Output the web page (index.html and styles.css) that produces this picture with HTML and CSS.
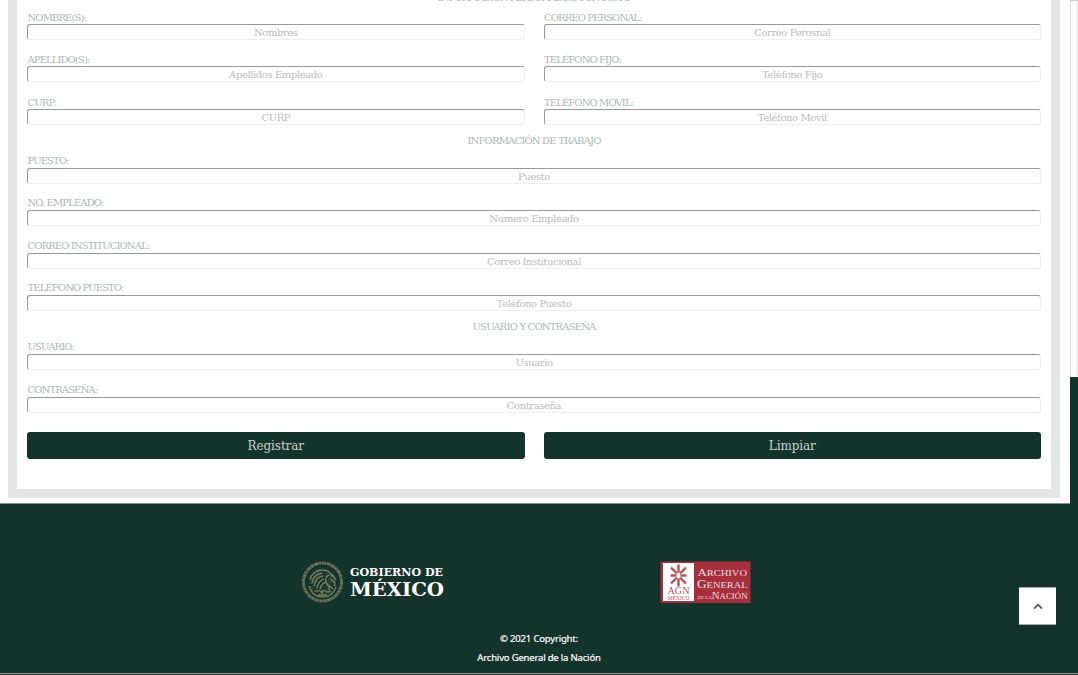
FILE: index.html
```html
<!DOCTYPE html>
<html lang="es">
<head>
<meta charset="utf-8">
<title>Registro de empleado</title>
<link rel="stylesheet" href="styles.css">
</head>
<body>
<div class="page">
  <main class="main">
    <form class="panel">
      <h2 class="title title-first">INFORMACIÓN PERSONAL DE CONTACTO</h2>
      <div class="columns">
        <div class="stack">
          <label class="field"><span class="label">NOMBRE(S):</span><input class="input" placeholder="Nombres"></label>
          <label class="field"><span class="label">APELLIDO(S):</span><input class="input" placeholder="Apellidos Empleado"></label>
          <label class="field"><span class="label">CURP:</span><input class="input" placeholder="CURP"></label>
        </div>
        <div class="stack">
          <label class="field"><span class="label">CORREO PERSONAL:</span><input class="input" placeholder="Correo Perosnal"></label>
          <label class="field"><span class="label">TELÉFONO FIJO:</span><input class="input" placeholder="Teléfono Fijo"></label>
          <label class="field"><span class="label">TELÉFONO MOVIL:</span><input class="input" placeholder="Teléfono Movil"></label>
        </div>
      </div>
      <h2 class="title">INFORMACIÓN DE TRABAJO</h2>
      <div class="stack">
        <label class="field"><span class="label">PUESTO:</span><input class="input" placeholder="Puesto"></label>
        <label class="field"><span class="label">NO. EMPLEADO:</span><input class="input" placeholder="Numero Empleado"></label>
        <label class="field"><span class="label">CORREO INSTITUCIONAL:</span><input class="input" placeholder="Correo Institucional"></label>
        <label class="field"><span class="label">TELÉFONO PUESTO:</span><input class="input" placeholder="Teléfono Puesto"></label>
      </div>
      <h2 class="title">USUARIO Y CONTRASEÑA</h2>
      <div class="stack">
        <label class="field"><span class="label">USUARIO:</span><input class="input" placeholder="Usuario"></label>
        <label class="field"><span class="label">CONTRASEÑA:</span><input class="input" placeholder="Contraseña"></label>
      </div>
      <div class="columns actions">
        <button class="button" type="button">Registrar</button>
        <button class="button" type="button">Limpiar</button>
      </div>
    </form>
  </main>
  <aside class="edge"></aside>
  <footer class="footer">
    <div class="logos">
      <svg class="logo-mx" width="150" height="44" viewBox="0 0 150 44">
        <g fill="none" stroke="#8b8b6c">
          <circle cx="22.500" cy="22" r="19" stroke-width="3" stroke-dasharray="2.600 .5 1.400 .4 3 .6" opacity=".75"/>
          <!-- eagle: wing feathers, head and tail -->
          <path stroke-width="1.500" opacity=".8" d="M10 20c1-6 6-10 12-10 5 0 8 2 9 5l3 2M12 23c1-6 5-9 10-10M14 26c1-6 4-9 9-10M17 28c1-5 3-8 7-9M20 29c1-4 3-6 6-7M29 15c-3 1-4 4-3 7s4 4 3 8M30 19c3 1 5 4 5 7M27 24l6 5M32 14l4 6"/>
          <!-- nopal and laurel -->
          <path stroke-width="1.600" opacity=".75" d="M9 26c2 7 7 11 13.500 11S34 33 36 27M15 32c2-2 4-2 6 0 2-2 4-2 6 0 2-1 3-1 4 0M18 35h9M22.500 31v6"/>
          <circle cx="22.500" cy="22" r="9" stroke-width="9" stroke-dasharray="1 1.200" opacity=".25"/>
        </g>
        <text class="mx-small" x="50" y="15.500" textLength="93" lengthAdjust="spacingAndGlyphs">GOBIERNO DE</text>
        <text class="mx-big" x="50" y="35.500" textLength="94" lengthAdjust="spacingAndGlyphs">MÉXICO</text>
      </svg>
      <svg class="logo-agn" width="91" height="43" viewBox="0 0 91 43">
        <rect x=".5" y=".5" width="90" height="41.500" fill="#a52f3a"/>
        <rect x="3" y="2" width="31" height="38" fill="#fff"/>
        <g fill="none" stroke="#b9525a" stroke-width="2.400">
          <path d="M18.500 3.500v8M18.500 17.500v8M10.500 14.500h6M20.500 14.500h6M11 6.500l6 6M26 6.500l-6 6M11 22.500l6-6M26 22.500l-6-6"/>
        </g>
        <text class="agn-red" x="7.500" y="32.500" font-size="10.500" textLength="22" lengthAdjust="spacingAndGlyphs">AGN</text>
        <text class="agn-red" x="7.500" y="38.500" font-size="5.500" textLength="22" lengthAdjust="spacingAndGlyphs">MÉXICO</text>
        <text class="agn" x="37.500" y="14.500" textLength="49.500" lengthAdjust="spacingAndGlyphs"><tspan font-size="11">A</tspan>RCHIVO</text>
        <text class="agn" x="37" y="26.500" textLength="50.500" lengthAdjust="spacingAndGlyphs"><tspan font-size="11.500">G</tspan>ENERAL</text>
        <text class="agn" x="37.500" y="37.500" textLength="50" lengthAdjust="spacingAndGlyphs"><tspan font-size="5">DE LA</tspan><tspan font-size="11">N</tspan>ACIÓN</text>
      </svg>
    </div>
    <p class="copy copy-year">© 2021 Copyright:</p>
    <p class="copy copy-org">Archivo General de la Nación</p>
  </footer>
  <div class="baseline"></div>
  <button class="to-top" type="button" aria-label="Subir">
    <svg width="10" height="7" viewBox="0 0 10 7"><path d="M1 5.700L5 1.700l4 4" fill="none" stroke="#555" stroke-width="1.800"/></svg>
  </button>
</div>
</body>
</html>
```
FILE: styles.css
```css
* { box-sizing: border-box; }
body { margin: 0; background: #fff; font-family: "DejaVu Serif", serif; overflow: hidden; }
.page { position: relative; width: 1078px; height: 675px; overflow: hidden; display: grid; grid-template-columns: 1070px 8px; grid-template-rows: 503px 170px 2px; background: linear-gradient(#14332b, #14332b) 1070px 377px / 8px 298px no-repeat #fff; }
.main { padding: 0 10px 5px 8px; overflow: hidden; }
.panel { height: 517.200px; margin-top: -19.200px; border: 9px solid #e5e5e5; border-top: 0; padding: 0 10px; }
.title { margin: 0; height: 29.200px; display: flex; align-items: center; justify-content: center; padding-top: 2px; font-size: 10px; font-weight: 400; letter-spacing: -.82px; color: #adb7b3; white-space: nowrap; }
.title-first { padding-top: 4px; letter-spacing: -1.050px; }
.columns { display: grid; grid-template-columns: 1fr 1fr; gap: 19px; }
.stack { display: flex; flex-direction: column; gap: 12.400px; }
.field { display: block; }
.label { display: block; height: 14px; line-height: 14.400px; padding-left: .5px; font-size: 10px; letter-spacing: -.9px; color: #adb7b3; white-space: nowrap; }
.columns .label { line-height: 16px; }
.input { display: block; width: 100%; height: 16px; margin: 0; padding: 1px 2px 0; border: 1px solid; border-color: #999 #eee #eee #999; border-radius: 3px; background: #fff; font: 10px "DejaVu Serif", serif; letter-spacing: -.4px; text-align: center; }
.input::placeholder { color: #bbb; opacity: 1; }
.actions { margin-top: 19.200px; }
.button { height: 27.500px; padding: 0; border: 0; border-radius: 3px; background: #14332b; color: #c8d1ce; font: 12px "DejaVu Serif", serif; letter-spacing: -.1px; }
.edge { height: 377px; background: #fbfbfb; border-left: 1px solid #ddd; border-top: 1px solid #ccc; border-right: 1px solid #e5e5e5; }
.footer { grid-column: 1 / 3; background: linear-gradient(#7f918c, #7f918c) 0 0 / 1070px 1px no-repeat #14332b; padding-top: 57px; }
.logos { display: flex; height: 44px; padding-left: 300px; gap: 210px; }
.logo-agn { margin-top: 1px; }
.mx-small { font: 700 10.500px "DejaVu Serif", serif; fill: #fff; }
.mx-big { font: 700 19px "DejaVu Serif", serif; fill: #fff; }
.agn { font-family: "Liberation Serif", serif; font-size: 9px; fill: #f6dfe1; }
.agn-red { font-family: "Liberation Serif", serif; fill: #b9525a; }
.copy { margin: 0; width: 1078px; text-align: center; font: 9.500px/19px "Noto Sans", sans-serif; color: #fff; letter-spacing: -.18px; -webkit-text-stroke: .2px #fff; }
.copy-year { margin-top: 24.500px; }
.baseline { grid-column: 1 / 3; background: #333; border-top: 1px solid #8b9794; }
.to-top { position: absolute; left: 1019px; top: 587px; width: 37px; height: 38px; padding: 0; border: 0; border-top: 1px solid #aaa; border-bottom: 1px solid #aaa; background: #fff; display: flex; align-items: center; justify-content: center; }
```
